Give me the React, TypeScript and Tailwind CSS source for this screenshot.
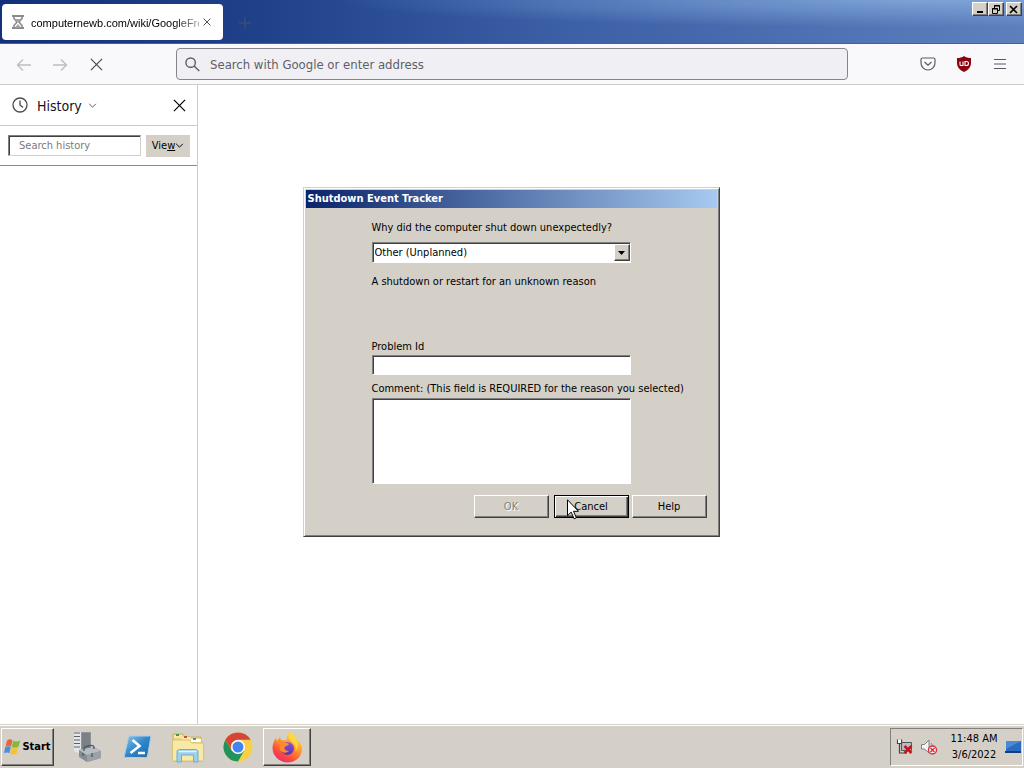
import React from "react";

const raised =
  "border border-t-white border-l-white border-r-[#404040] border-b-[#404040] bg-[#d4d0c8] shadow-[inset_-1px_-1px_0_#808080]";
const sunken =
  "border border-t-[#808080] border-l-[#808080] border-r-white border-b-white bg-white shadow-[inset_1px_1px_0_#404040]";

function Cross({ className = "" }: { className?: string }) {
  return (
    <svg viewBox="0 0 14 14" className={className} fill="none" stroke="currentColor" strokeWidth="1.3" aria-hidden="true">
      <path d="M1 1l12 12M13 1L1 13" />
    </svg>
  );
}

function Chevron({ className = "" }: { className?: string }) {
  return (
    <svg viewBox="0 0 10 6" className={className} fill="none" stroke="currentColor" strokeWidth="1.2" aria-hidden="true">
      <path d="M1 1l4 4 4-4" />
    </svg>
  );
}

function TitleBar() {
  return (
    <header className="flex h-[44px] shrink-0 items-start border-b border-[#4a5f8c] bg-[radial-gradient(ellipse_at_90%_0%,rgba(150,190,235,0.6),rgba(150,190,235,0)_45%),linear-gradient(to_right,#14307a,#1f4189_25%,#3c5fa6_55%,#5d80bd)]">
      <div className="mt-1 ml-0.5 flex h-9 w-[221px] items-center rounded bg-white pr-2 pl-2">
        <svg width="16" height="16" viewBox="0 0 16 16" className="shrink-0" fill="none" stroke="#8b8b8b" aria-hidden="true">
          <path d="M2 2h12M2 14h12" strokeWidth="2" />
          <path d="M4 2v2.5L7 8l-3 3.5V14M12 2v2.5L9 8l3 3.5V14" strokeWidth="1.6" />
          <path d="M5 13.5L8 10l3 3.5zM5 5h6L8 8z" fill="#a5a5a5" stroke="none" />
        </svg>
        <span className="mt-0.5 ml-[5px] w-[168px] shrink-0 font-['Liberation_Sans',sans-serif] text-[11px] whitespace-nowrap text-black [mask-image:linear-gradient(to_right,#000_85%,rgba(0,0,0,0.3))]">
          computernewb.com/wiki/GoogleFre
        </span>
        <button aria-label="Close tab" className="ml-1 text-[#15141a]">
          <Cross className="size-2" />
        </button>
      </div>
      <button aria-label="New tab" className="mt-[17px] ml-4 text-[#46536f]">
        <svg width="12" height="12" viewBox="0 0 12 12" stroke="currentColor" aria-hidden="true">
          <path d="M6 0v12M0 6h12" />
        </svg>
      </button>
      <div className="mt-0.5 mr-0.5 ml-auto flex">
        <button aria-label="Minimize" className={`${raised} flex h-[14px] w-4 items-center justify-center`}>
          <svg width="12" height="10" viewBox="0 0 12 10" aria-hidden="true"><path d="M3 7h6v2H3z" /></svg>
        </button>
        <button aria-label="Restore" className={`${raised} flex h-[14px] w-4 items-center justify-center`}>
          <svg width="12" height="11" viewBox="0 0 12 11" fill="none" stroke="#000" aria-hidden="true">
            <path d="M4.500 4V1.500h5v5H8M4 2h6M2.500 4.500h5v5h-5zM2 5h6" />
          </svg>
        </button>
        <button aria-label="Close" className={`${raised} ml-0.5 flex h-[14px] w-4 items-center justify-center`}>
          <svg width="10" height="9" viewBox="0 0 10 9" stroke="#000" strokeWidth="1.7" aria-hidden="true">
            <path d="M1 1l7 7M8 1L1 8" />
          </svg>
        </button>
      </div>
    </header>
  );
}

function Toolbar() {
  return (
    <nav className="flex h-[41px] shrink-0 items-center border-b border-[#cccccc] bg-[#f9f9fb] pr-4 pl-4">
      <div className="flex w-40 shrink-0 items-center gap-5">
        <button aria-label="Back" disabled className="text-[#bdbdbf]">
          <svg width="16" height="16" viewBox="0 0 16 16" fill="none" stroke="currentColor" strokeWidth="1.4" aria-hidden="true">
            <path d="M15 9H1.500M7 3.500L1.500 9 7 14.500" />
          </svg>
        </button>
        <button aria-label="Forward" disabled className="text-[#bdbdbf]">
          <svg width="16" height="16" viewBox="0 0 16 16" fill="none" stroke="currentColor" strokeWidth="1.4" aria-hidden="true">
            <path d="M1 9h13.500M9 3.500L14.500 9 9 14.500" />
          </svg>
        </button>
        <button aria-label="Stop" className="text-[#4a4a50]">
          <Cross className="ml-0.5 size-[13px]" />
        </button>
      </div>
      <label className="flex h-8 min-w-0 flex-1 items-center rounded border border-[#85858f] bg-[#f0f0f4] pl-2">
        <svg width="15" height="15" viewBox="0 0 16 16" fill="none" stroke="#5b5b66" strokeWidth="1.5" aria-hidden="true">
          <circle cx="6" cy="6" r="5" />
          <path d="M9.700 9.700l5.500 5.300" />
        </svg>
        <input
          aria-label="Address"
          placeholder="Search with Google or enter address"
          className="mt-0.5 ml-2.5 min-w-0 flex-1 bg-transparent text-[13px] outline-none placeholder:text-[#5f5f68]"
        />
      </label>
      <div className="ml-[72px] flex shrink-0 items-center gap-5">
        <button aria-label="Save to Pocket" className="text-[#5b5b66]">
          <svg width="16" height="16" viewBox="0 0 16 16" fill="none" stroke="currentColor" strokeWidth="1.2" aria-hidden="true">
            <path d="M2.500 2h11A1.500 1.500 0 0115 3.500V7A7 7 0 011 7V3.500A1.500 1.500 0 012.500 2zM4.500 6L8 9.300 11.500 6" />
          </svg>
        </button>
        <button aria-label="uBlock Origin">
          <svg width="16" height="16" viewBox="0 0 16 16" aria-hidden="true">
            <path d="M8 0c2 1.500 4 2 7 2v5c0 4.500-3 7-7 9-4-2-7-4.500-7-9V2c3 0 5-.5 7-2z" fill="#8a0510" />
            <path d="M4 5.500v3a1 1 0 001 1h2v-4M9 5.500v4h1.500a2 2 0 000-4z" fill="none" stroke="#fff" strokeWidth="1.1" />
          </svg>
        </button>
        <button aria-label="Application menu" className="text-[#5b5b66]">
          <svg width="16" height="16" viewBox="0 0 16 16" stroke="currentColor" strokeWidth="1.2" aria-hidden="true">
            <path d="M2 3.500h12M2 8h12M2 12.500h12" />
          </svg>
        </button>
      </div>
    </nav>
  );
}

function Sidebar() {
  return (
    <aside className="flex w-[198px] shrink-0 flex-col border-r border-[#cccccc] bg-white">
      <div className="flex h-[41px] items-center border-b border-[#cccccc] pr-[11px] pl-3">
        <button className="flex items-center text-sm text-[#15141a]">
          <svg width="16" height="16" viewBox="0 0 16 16" fill="none" stroke="#4a4a50" strokeWidth="1.3" aria-hidden="true">
            <circle cx="8" cy="8" r="7" />
            <path d="M8 3.500V8l3 2.500" />
          </svg>
          <span className="mt-0.5 ml-[9px]">History</span>
          <Chevron className="ml-1.5 h-[5px] w-[9px] text-[#5b5b66]" />
        </button>
        <button aria-label="Close sidebar" className="ml-auto text-black">
          <Cross className="size-[13px]" />
        </button>
      </div>
      <div className="flex h-10 items-center justify-between border-b border-[#8a8a8a] pr-[7px] pl-2">
        <input
          aria-label="Search history"
          placeholder="Search history"
          className="h-[21px] w-[133px] border border-t-[#808080] border-r-[#d4d0c8] border-b-[#d4d0c8] border-l-[#808080] bg-white pl-2.5 text-[11px] shadow-[inset_1px_1px_0_#404040] outline-none placeholder:text-[#7b7b7b]"
        />
        <button className="flex h-[22px] w-11 items-center justify-center bg-[#d4d0c8] text-[11px] text-black">
          <span className="mt-0.5">Vie<span className="underline">w</span></span>
          <Chevron className="h-[5px] w-[9px]" />
        </button>
      </div>
    </aside>
  );
}

function Cursor() {
  return (
    <svg width="12" height="21" viewBox="0 0 12 21" className="pointer-events-none absolute top-1 left-[13px]" aria-hidden="true">
      <path d="M.5 .8v15.900l3.700-3.600 2.900 6.700 2.300-1-2.900-6.500h5z" fill="#fff" stroke="#000" />
    </svg>
  );
}

function ShutdownDialog() {
  const button = `${raised} h-[23px] w-[75px]`;
  return (
    <section
      role="dialog"
      aria-labelledby="dialog-title"
      className="w-[417px] border border-t-[#d4d0c8] border-r-[#404040] border-b-[#404040] border-l-[#d4d0c8] bg-[#d4d0c8] p-0.5 text-[11px] leading-[14px] text-black shadow-[inset_1px_1px_0_#fff,inset_-1px_-1px_0_#808080]"
    >
      <h1 id="dialog-title" className="bg-[linear-gradient(to_right,#0a246a,#a6caf0)] px-0.5 text-[11px] leading-[18px] font-bold text-white">
        Shutdown Event Tracker
      </h1>
      <form className="pt-[13px] pr-2.5 pb-4 pl-[66px]" onSubmit={(e) => e.preventDefault()}>
        <label htmlFor="reason" className="block whitespace-nowrap">Why did the computer shut down unexpectedly?</label>
        <div className="relative mt-[7px] w-[259px]">
          <select id="reason" className={`${sunken} block h-[21px] w-full appearance-none pl-0.5 outline-none`}>
            <option>Other (Unplanned)</option>
          </select>
          <span className={`${raised} pointer-events-none absolute top-0.5 right-px flex h-[17px] w-4 items-center justify-center`}>
            <svg width="7" height="4" viewBox="0 0 7 4" aria-hidden="true"><path d="M0 0h7L3.500 4z" /></svg>
          </span>
        </div>
        <p className="mt-3">A shutdown or restart for an unknown reason</p>
        <label htmlFor="problem" className="mt-[51px] block">Problem Id</label>
        <input id="problem" className={`${sunken} mt-px block h-5 w-[259px] px-1 outline-none`} />
        <label htmlFor="comment" className="mt-[7px] block whitespace-nowrap">
          Comment: (This field is REQUIRED for the reason you selected)
        </label>
        <textarea id="comment" className={`${sunken} mt-0.5 block h-[86px] w-[259px] resize-none p-1 outline-none`} />
        <div className="mt-[11px] flex justify-end">
          <button disabled className={`${button} text-[#808080] [text-shadow:1px_1px_0_#fff]`}>OK</button>
          <div className="relative mr-[3px] ml-[5px]">
            <button className="h-[23px] w-[75px] border border-black bg-[#d4d0c8] shadow-[inset_1px_1px_0_#fff,inset_-1px_-1px_0_#404040,inset_-2px_-2px_0_#808080]">
              Cancel
            </button>
            <Cursor />
          </div>
          <button className={button}>Help</button>
        </div>
      </form>
    </section>
  );
}

function ServerManagerIcon() {
  return (
    <svg width="32" height="32" viewBox="0 0 32 32" aria-hidden="true">
      <path d="M9 1h10v22H9z" fill="#8f9499" />
      <path d="M10 2h8v20h-8z" fill="#7c8186" />
      <path d="M2 1h7v22l-7-3z" fill="#e4e6e8" />
      <path d="M2 2h6M2 5.500h6M2 9h6M2 12.500h6M2 16h6" stroke="#5c6166" strokeWidth="1.2" />
      <path d="M7 19l15-3 7 4v7l-14 4-8-5z" fill="#858c94" />
      <path d="M7 19l15-3 7 4-14 4z" fill="#b7bdc3" />
      <path d="M15 24l14-4v7l-14 4z" fill="#9aa1a8" />
      <path d="M12 20v-2c0-3 9-5 10-2v2M11 22v3M20 22v4" stroke="#50565c" fill="none" strokeWidth="1.3" />
    </svg>
  );
}

function PowerShellIcon() {
  return (
    <svg width="28" height="24" viewBox="0 0 28 24" aria-hidden="true">
      <defs>
        <linearGradient id="ps" x1="0" y1="0" x2="1" y2="1">
          <stop offset="0" stopColor="#8cc8ec" /><stop offset=".5" stopColor="#2f86c8" /><stop offset="1" stopColor="#1b68a8" />
        </linearGradient>
      </defs>
      <path d="M6 1h19.500q1.500 0 1.200 1.500L23.500 21q-.4 1.500-2 1.500H1.500q-1.500 0-1.200-1.500L4.500 2.500Q4.800 1 6 1z" fill="url(#ps)" stroke="#a6cfea" />
      <path d="M8.500 5l7 6-9 7M14 18h7" fill="none" stroke="#fff" strokeWidth="2.6" />
    </svg>
  );
}

function FolderIcon() {
  return (
    <svg width="34" height="32" viewBox="0 0 34 32" aria-hidden="true">
      <path d="M2 3h10l2 3h16v24H2z" fill="#ecd585" stroke="#c9a94c" strokeWidth=".8" />
      <path d="M3 4h8v3H3z" fill="#f7e8a8" /><path d="M5 3h3v2H5z" fill="#3f9a46" />
      <path d="M11 6h9v3h-9z" fill="#f7e8a8" /><path d="M13 5h3v2h-3z" fill="#c8523c" />
      <path d="M20 8h10v3H20z" fill="#fff" /><path d="M22 7h3v2h-3z" fill="#3f8ec4" />
      <path d="M1.500 9h17l2 3h12v18h-31z" fill="#f8e9a7" stroke="#d6bc67" strokeWidth=".8" />
      <path d="M6 31V21c0-1.500 1-2.500 2.500-2.500h16c1.500 0 2.500 1 2.500 2.500v10h-4.500v-7h-12v7z" fill="#9cd0ec" stroke="#6aaed4" />
      <path d="M7.500 20.500h18" stroke="#dff3fc" strokeWidth="1.5" />
    </svg>
  );
}

function ChromeIcon() {
  return (
    <svg width="30" height="30" viewBox="0 0 30 30" aria-hidden="true">
      <circle cx="15" cy="15" r="14.500" fill="#f9cf45" />
      <path d="M2.440 7.750A14.500 14.500 0 0015 29.500L21.300 18.600 15 15 8.700 18.600z" fill="#23935a" />
      <path d="M2.440 7.750A14.500 14.500 0 0127.560 7.750H15A7.250 7.250 0 008.700 18.600z" fill="#d5453a" />
      <circle cx="15" cy="15" r="7" fill="#fff" />
      <circle cx="15" cy="15" r="5.500" fill="#4484ee" />
    </svg>
  );
}

function FirefoxIcon() {
  return (
    <svg width="32" height="32" viewBox="0 0 32 32" aria-hidden="true">
      <defs>
        <linearGradient id="fx" x1=".8" y1="0" x2=".2" y2="1">
          <stop offset="0" stopColor="#ffe44a" /><stop offset=".4" stopColor="#ff9a2c" /><stop offset=".75" stopColor="#fb4740" /><stop offset="1" stopColor="#e7267a" />
        </linearGradient>
        <linearGradient id="fx2" x1="0" y1="0" x2="0" y2="1">
          <stop offset="0" stopColor="#8a50e8" /><stop offset="1" stopColor="#5637a8" />
        </linearGradient>
      </defs>
      <path d="M19 1c4 2 6 5 6.500 7.500C28 10 31 13 31 18c0 8-6.500 13.500-14.500 13.500S1.500 25 1.500 17c0-4 1.500-7.500 3.500-10l.8 3L9 6l1 3.500c2-.5 4-.5 5.500 0C15.500 6 17 3 19 1z" fill="url(#fx)" />
      <circle cx="16.500" cy="17.500" r="6.500" fill="url(#fx2)" />
      <path d="M5 11c2-2 6-2 8 0 1 1 4 .5 5 2-1 2-4 2-4.500 3.500-.5 2 2 4 4.500 3-1.500 3-7 3-9-1-1-3 0-4 0-4z" fill="#ff8a2c" />
      <path d="M19 1c4 2 6 5 6.500 7.500 2 4 2 8-1 12 1-5-1-8-4-10C17 8 17 4 19 1z" fill="#ffd83d" />
    </svg>
  );
}

function Taskbar() {
  return (
    <footer className="flex h-11 shrink-0 items-start border-t border-[#d4d0c8] bg-[#d4d0c8] pt-0.5 text-black shadow-[inset_0_1px_0_#fff]">
      <button className={`${raised} mt-px ml-px flex h-[38px] w-[53px] items-center justify-center gap-px text-[11px] font-bold`}>
        <svg width="17" height="16" viewBox="0 0 17 16" aria-hidden="true">
          <path d="M3 1.500c2-1.500 4-1.500 5.500-.3L7 7.500C5.500 6.500 3.500 6.500 1.500 7.700z" fill="#e8653a" />
          <path d="M9.200 1.800c2 1 4 1 7-.3l-1.700 6.200c-2 1.200-4.500 1.200-6.800.3z" fill="#86b83c" />
          <path d="M1.200 8.300c2-1.200 4-1.200 5.700-.2l-1.700 6.100c-1.500-1-3.500-1-5.200.1z" fill="#4a8fdb" />
          <path d="M7.500 8.700c2 1 4.300 1 6.800-.2L12.700 14.500c-2 1.200-4.700 1.200-6.800.3z" fill="#f4c430" />
        </svg>
        Start
      </button>
      <div className="mt-px ml-[9px] flex h-[38px] items-center">
        <button aria-label="Server Manager" className="flex w-[50px] justify-center"><ServerManagerIcon /></button>
        <button aria-label="Windows PowerShell" className="flex w-[50px] justify-center"><PowerShellIcon /></button>
        <button aria-label="Windows Explorer" className="flex w-[50px] justify-center"><FolderIcon /></button>
        <button aria-label="Google Chrome" className="flex w-[50px] justify-center"><ChromeIcon /></button>
        <button aria-label="Firefox" className={`${raised} flex h-[38px] w-12 items-center justify-center`}><FirefoxIcon /></button>
      </div>
      <div className="mt-px mr-px ml-auto flex h-[38px] items-center border border-t-[#808080] border-r-white border-b-white border-l-[#808080] pl-[5px]">
        <svg width="18" height="18" viewBox="0 0 18 18" fill="none" aria-hidden="true">
          <path d="M5.500 4.500h10v8h-10z" fill="#b8bcc0" stroke="#555" />
          <path d="M1.500 1.500v4h4v-4M3.500 5.500V15H11" stroke="#444" strokeWidth="1.2" />
          <path d="M2 2h3v3H2z" fill="#fff" />
          <path d="M8.500 8l7 7M15.500 8l-7 7" stroke="#c9141d" strokeWidth="2.6" />
        </svg>
        <svg width="18" height="18" viewBox="0 0 18 18" fill="none" className="ml-1.5" aria-hidden="true">
          <path d="M1.500 6.500h3L9 2v13l-4.500-4h-3z" fill="#f4f4f4" stroke="#808080" />
          <path d="M11 5c1 1 1 2 1 3" stroke="#808080" />
          <circle cx="12.500" cy="12" r="4" fill="#fff" stroke="#d5303a" strokeWidth="1.4" />
          <path d="M10.500 10l4 4M14.500 10l-4 4" stroke="#d5303a" strokeWidth="1.5" />
        </svg>
        <div className="ml-[11px] w-[50px] text-center text-[11px] leading-4 whitespace-nowrap">
          <div>11:48 AM</div>
          <div>3/6/2022</div>
        </div>
        <svg width="17" height="14" viewBox="0 0 17 14" className="ml-1.5" aria-hidden="true">
          <path d="M1 1h15v10H1z" fill="#2c6cc0" />
          <path d="M1 1h15L1 9z" fill="#4b8bd6" />
          <path d="M0 11h16v2H0z" fill="#153d7c" />
        </svg>
      </div>
    </footer>
  );
}

export default function App() {
  return (
    <div className="flex min-h-screen flex-col bg-white font-['DejaVu_Sans_Condensed','DejaVu_Sans',sans-serif]">
      <div className="relative flex flex-1 flex-col">
        <TitleBar />
        <Toolbar />
        <main className="flex flex-1">
          <Sidebar />
          <div className="flex-1 bg-white" />
        </main>
        <div className="absolute inset-0 flex items-center justify-center pr-0.5">
          <ShutdownDialog />
        </div>
      </div>
      <Taskbar />
    </div>
  );
}
